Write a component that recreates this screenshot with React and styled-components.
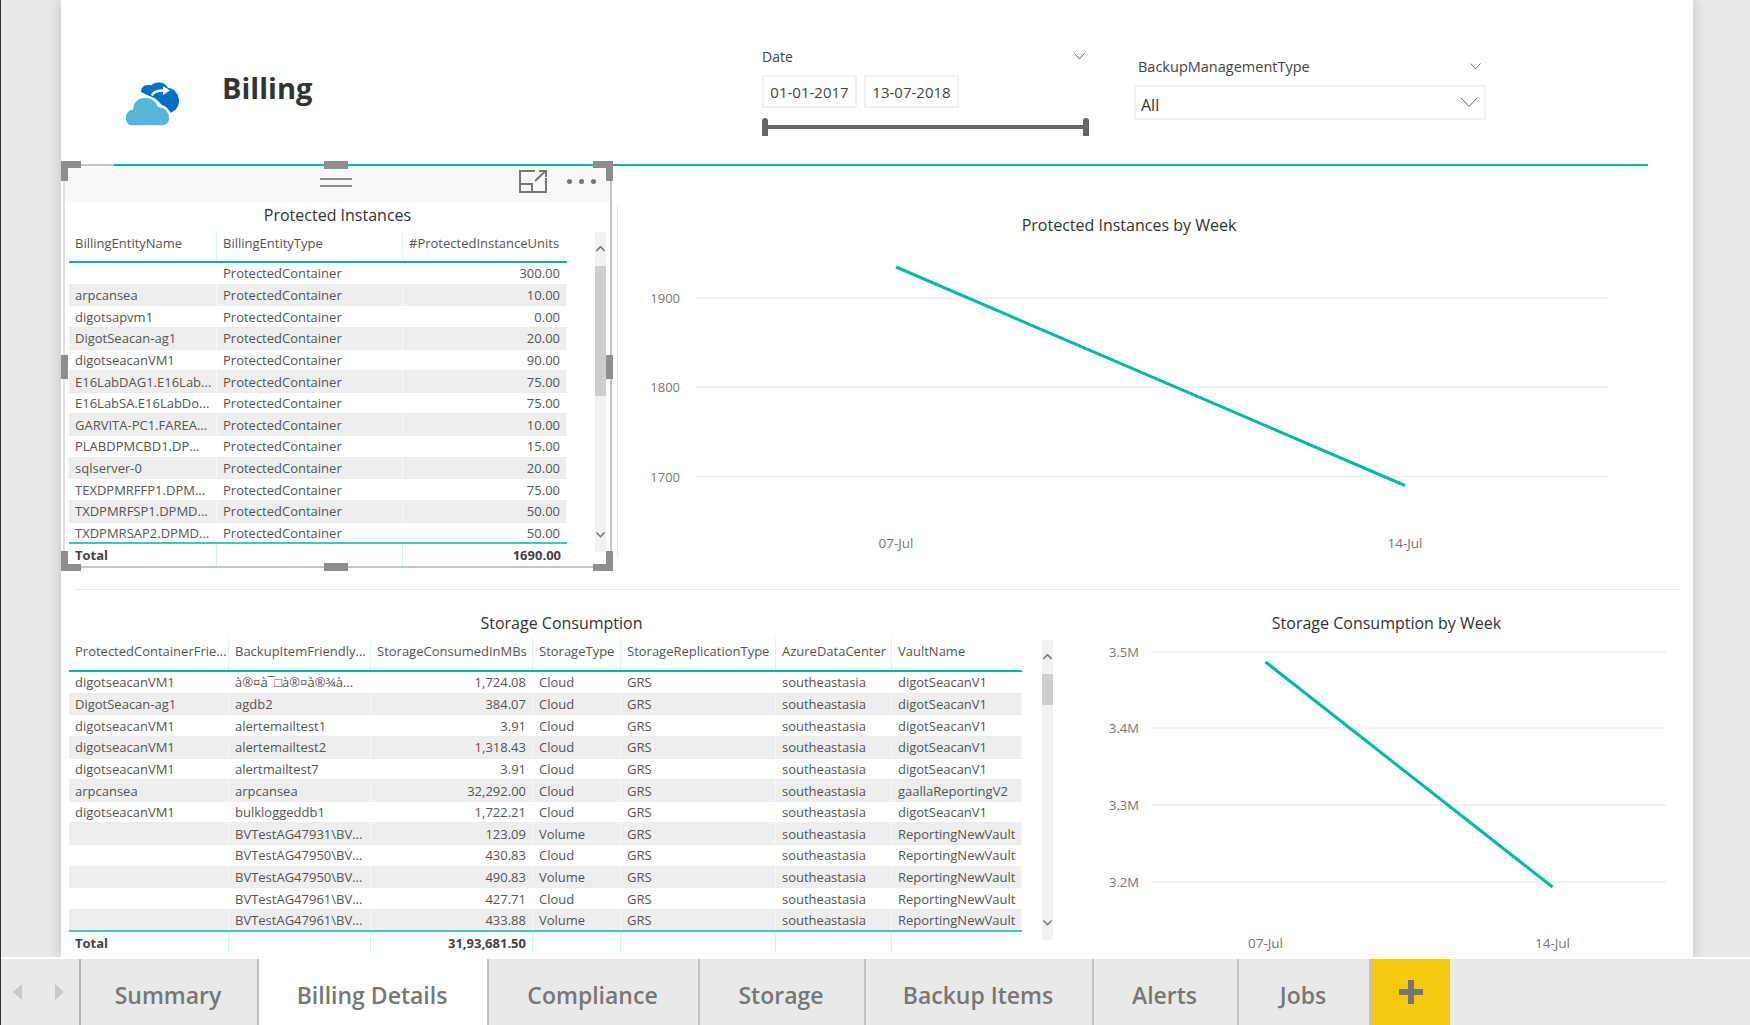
import React from 'react'
import styled, { createGlobalStyle } from 'styled-components'

const GlobalStyle = createGlobalStyle`
  html, body { margin: 0; padding: 0; }
  body { font-family: "Open Sans", "Noto Sans", sans-serif; background: #fff; overflow: hidden; }
  * { box-sizing: border-box; }
`

const protectedCols = '148px 186px 164px'
const protectedColumns = ['BillingEntityName', 'BillingEntityType', '#ProtectedInstanceUnits']
const protectedRows = [
  ['', 'ProtectedContainer', '300.00'],
  ['arpcansea', 'ProtectedContainer', '10.00'],
  ['digotsapvm1', 'ProtectedContainer', '0.00'],
  ['DigotSeacan-ag1', 'ProtectedContainer', '20.00'],
  ['digotseacanVM1', 'ProtectedContainer', '90.00'],
  ['E16LabDAG1.E16Lab...', 'ProtectedContainer', '75.00'],
  ['E16LabSA.E16LabDo...', 'ProtectedContainer', '75.00'],
  ['GARVITA-PC1.FAREA...', 'ProtectedContainer', '10.00'],
  ['PLABDPMCBD1.DP...', 'ProtectedContainer', '15.00'],
  ['sqlserver-0', 'ProtectedContainer', '20.00'],
  ['TEXDPMRFFP1.DPM...', 'ProtectedContainer', '75.00'],
  ['TXDPMRFSP1.DPMD...', 'ProtectedContainer', '50.00'],
  ['TXDPMRSAP2.DPMD...', 'ProtectedContainer', '50.00'],
]

const storageCols = '160px 142px 162px 88px 155px 116px 130px'
const storageColumns = [
  'ProtectedContainerFrie...', 'BackupItemFriendly...', 'StorageConsumedInMBs', 'StorageType',
  'StorageReplicationType', 'AzureDataCenter', 'VaultName',
]
const storageRow = (name, item, size, type, vault = 'digotSeacanV1') => [name, item, size, type, 'GRS', 'southeastasia', vault]
const storageRows = [
  storageRow('digotseacanVM1', 'à®¤à¯\u25a1à®¤à®¾à...', '1,724.08', 'Cloud'),
  storageRow('DigotSeacan-ag1', 'agdb2', '384.07', 'Cloud'),
  storageRow('digotseacanVM1', 'alertemailtest1', '3.91', 'Cloud'),
  storageRow('digotseacanVM1', 'alertemailtest2', '1,318.43', 'Cloud'),
  storageRow('digotseacanVM1', 'alertmailtest7', '3.91', 'Cloud'),
  storageRow('arpcansea', 'arpcansea', '32,292.00', 'Cloud', 'gaallaReportingV2'),
  storageRow('digotseacanVM1', 'bulkloggeddb1', '1,722.21', 'Cloud'),
  storageRow('', 'BVTestAG47931\\BV...', '123.09', 'Volume', 'ReportingNewVault'),
  storageRow('', 'BVTestAG47950\\BV...', '430.83', 'Cloud', 'ReportingNewVault'),
  storageRow('', 'BVTestAG47950\\BV...', '490.83', 'Volume', 'ReportingNewVault'),
  storageRow('', 'BVTestAG47961\\BV...', '427.71', 'Cloud', 'ReportingNewVault'),
  storageRow('', 'BVTestAG47961\\BV...', '433.88', 'Volume', 'ReportingNewVault'),
]

const tabs = [
  { name: 'Summary', width: 178 },
  { name: 'Billing Details', width: 230, active: true },
  { name: 'Compliance', width: 211 },
  { name: 'Storage', width: 166 },
  { name: 'Backup Items', width: 228 },
  { name: 'Alerts', width: 145 },
  { name: 'Jobs', width: 132 },
]

const Chevron = ({ size = 11, up = false, color = '#666', weight = 1 }) => (
  <svg width={size} height={size * 0.6} viewBox="0 0 10 6" style={{ display: 'block' }}>
    <polyline
      points={up ? '0.5,5.5 5,0.7 9.5,5.5' : '0.5,0.5 5,5.3 9.5,0.5'}
      fill="none"
      stroke={color}
      strokeWidth={weight}
      vectorEffect="non-scaling-stroke"
    />
  </svg>
)

const Logo = () => (
  <svg width="75" height="65" viewBox="0 0 75 65">
    <path
      d="M26 20C26 15 30 12 36 13.500C40 9 50 9.500 53 16C59 16 64 22 64 29C64 34 61 39 55 41L42 28Z"
      fill="#0072c6"
    />
    <path
      d="M17 54.500C12 54.500 9.500 50 9.500 46C9.500 41 13 37 17 36.500C17 30 23 24.500 30 24.500C36 24.500 42 28 44 34C50 34 55.500 40 55.500 46C55.500 51 51.500 54.500 47 54.500Z"
      fill="#59b4d9"
      stroke="#fff"
      strokeWidth="2.500"
    />
    <path d="M37 23.500C38 20.500 42 18.500 49 18.500" fill="none" stroke="#fff" strokeWidth="2.500" />
    <polygon points="48,14 55,18.500 48,23" fill="#fff" />
  </svg>
)

const FocusIcon = () => (
  <svg width="28" height="23" viewBox="0 0 28 23">
    <path
      d="M27 8V22H1V1H16M1 14H13V22M16 11L26 1.500M20 1H27V7"
      fill="none"
      stroke="#777"
      strokeWidth="2"
    />
  </svg>
)

const Chart = ({ width, height, grid, labelX, gridFrom, gridTo, xLabels, labelY, line, stroke }) => (
  <svg width={width} height={height} style={{ display: 'block' }}>
    {grid.map((g) => (
      <g key={g.label}>
        <line x1={gridFrom} x2={gridTo} y1={g.y} y2={g.y} stroke="#ececec" strokeWidth="1.500" />
        <text x={labelX} y={g.y + 5} textAnchor="end" fontSize="13" fill="#777">{g.label}</text>
      </g>
    ))}
    {xLabels.map((l) => (
      <text key={l.label} x={l.x} y={labelY} textAnchor="middle" fontSize="13.500" fill="#777">{l.label}</text>
    ))}
    <line x1={line[0]} y1={line[1]} x2={line[2]} y2={line[3]} stroke="#01b8aa" strokeWidth={stroke} />
  </svg>
)

const DataTable = ({ cols, columns, rows, total, totalColumn, width, headHeight, headPad, bodyHeight, totalHeight, numeric }) => (
  <TableWrap $width={width}>
    <HeadRow $cols={cols} $height={headHeight}>
      {columns.map((c, i) => (
        <HeadCell key={c} $last={i === columns.length - 1} $pad={headPad}>{c}</HeadCell>
      ))}
    </HeadRow>
    <Body $height={bodyHeight}>
      {rows.map((row, r) => (
        <Row key={r} $cols={cols} $odd={r % 2 === 1}>
          {row.map((cell, i) => (
            <Cell key={i} $right={i === numeric}>{cell}</Cell>
          ))}
        </Row>
      ))}
    </Body>
    <TotalRow $cols={cols} $height={totalHeight}>
      {columns.map((c, i) => (
        <TotalCell key={c} $right={i === numeric} $last={i === columns.length - 1}>
          {i === 0 ? 'Total' : i === totalColumn ? total : ''}
        </TotalCell>
      ))}
    </TotalRow>
  </TableWrap>
)

const Scrollbar = ({ height, thumb, marginTop = 0 }) => (
  <Track $height={height} $marginTop={marginTop}>
    <ArrowBox><Chevron size={9} up weight={1.5} color="#777" /></ArrowBox>
    <Thumb $height={thumb} />
    <TrackRest />
    <ArrowBox><Chevron size={9} weight={1.5} color="#777" /></ArrowBox>
  </Track>
)

export default function App() {
  return (
    <Page>
      <GlobalStyle />
      <Main>
        <Gutter $width={60} />
        <Canvas>
          <Header>
            <LogoBlock><Logo /></LogoBlock>
            <TitleBlock><PageTitle>Billing</PageTitle></TitleBlock>
            <DateSlicer>
              <SlicerLabel>
                <span>Date</span>
                <Chevron />
              </SlicerLabel>
              <DateInputs>
                <DateInput>01-01-2017</DateInput>
                <DateInput>13-07-2018</DateInput>
              </DateInputs>
              <Slider>
                <SliderHandle />
                <SliderTrack />
                <SliderHandle />
              </Slider>
            </DateSlicer>
            <TypeSlicer>
              <SlicerLabel>
                <span>BackupManagementType</span>
                <Chevron />
              </SlicerLabel>
              <Dropdown>
                <span>All</span>
                <Chevron size={18} />
              </Dropdown>
            </TypeSlicer>
          </Header>
          <TealRule />
          <TopRow>
            <FocusedVisual>
              <TopEdge />
              <Corner $v="top" $h="left" />
              <Corner $v="top" $h="right" />
              <Corner $v="bottom" $h="left" />
              <Corner $v="bottom" $h="right" />
              <MidHandle $v="top" />
              <MidHandle $v="bottom" />
              <SideHandle $h="left" />
              <SideHandle $h="right" />
              <VisualHeader>
                <Hamburger />
                <HeaderIcons>
                  <FocusIcon />
                  <Dots><i /><i /><i /></Dots>
                </HeaderIcons>
              </VisualHeader>
              <TableTitle $height={29}>Protected Instances</TableTitle>
              <TableArea $gap={28}>
                <DataTable
                  cols={protectedCols}
                  columns={protectedColumns}
                  rows={protectedRows}
                  total="1690.00"
                  totalColumn={2}
                  numeric={2}
                  width={498}
                  headHeight={31}
                  headPad={8}
                  bodyHeight={279}
                  totalHeight={24}
                />
                <Scrollbar height={320} thumb={130} />
              </TableArea>
            </FocusedVisual>
            <ChartPanel $width={1023} $border $marginLeft={5} $marginTop={39}>
              <ChartTitle $height={38} $pad={2}>Protected Instances by Week</ChartTitle>
              <Chart
                width={1023}
                height={314}
                grid={[{ label: '1900', y: 55 }, { label: '1800', y: 144 }, { label: '1700', y: 233.5 }]}
                labelX={62}
                gridFrom={77}
                gridTo={990}
                xLabels={[{ label: '07-Jul', x: 278 }, { label: '14-Jul', x: 787 }]}
                labelY={305}
                line={[278, 24, 787, 242.5]}
                stroke={3}
              />
            </ChartPanel>
          </TopRow>
          <Separator />
          <BottomRow>
            <StoragePanel>
              <TableTitle $height={30} $pad={3}>Storage Consumption</TableTitle>
              <TableArea $gap={20}>
                <DataTable
                  cols={storageCols}
                  columns={storageColumns}
                  rows={storageRows}
                  total="31,93,681.50"
                  totalColumn={2}
                  numeric={2}
                  width={953}
                  headHeight={34}
                  headPad={6}
                  bodyHeight={258}
                  totalHeight={23}
                />
                <Scrollbar height={300} thumb={31} marginTop={2} />
              </TableArea>
            </StoragePanel>
            <ChartPanel $width={613} $marginLeft={26}>
              <ChartTitle $height={30}>Storage Consumption by Week</ChartTitle>
              <Chart
                width={613}
                height={319}
                grid={[{ label: '3.5M', y: 14 }, { label: '3.4M', y: 90 }, { label: '3.3M', y: 167 }, { label: '3.2M', y: 244 }]}
                labelX={59}
                gridFrom={72}
                gridTo={586}
                xLabels={[{ label: '07-Jul', x: 185.5 }, { label: '14-Jul', x: 472.5 }]}
                labelY={310}
                line={[185.5, 24, 472.5, 249]}
                stroke={3}
              />
            </ChartPanel>
          </BottomRow>
        </Canvas>
        <Gutter $width={57} />
      </Main>
      <TabBar>
        <TabNav>
          <NavArrow $dir="left" />
          <NavArrow $dir="right" />
        </TabNav>
        {tabs.map((t) => (
          <Tab key={t.name} $width={t.width} $active={t.active}>{t.name}</Tab>
        ))}
        <AddTab>
          <svg width="24" height="24" viewBox="0 0 24 24">
            <path d="M9 0H15V9H24V15H15V24H9V15H0V9H9Z" fill="#757575" />
          </svg>
        </AddTab>
      </TabBar>
    </Page>
  )
}

const Page = styled.div`
  width: 1750px;
  height: 1025px;
  display: flex;
  flex-direction: column;
  border-left: 1px solid #333;
  overflow: hidden;
  background: #fff;
`

const Main = styled.div`
  display: flex;
  height: 957px;
  overflow: hidden;
`

const Gutter = styled.div`
  width: ${(props) => props.$width}px;
  flex: none;
  background: #e9e9e9;
`

const Canvas = styled.div`
  width: 1632px;
  flex: none;
  display: flex;
  flex-direction: column;
  background: #fff;
  box-shadow: 0 0 14px rgba(0, 0, 0, 0.18);
  position: relative;
`

const Header = styled.div`
  height: 164px;
  flex: none;
  display: flex;
  align-items: flex-start;
  padding-left: 54px;
`

const LogoBlock = styled.div`
  width: 75px;
  margin-top: 72px;
`

const TitleBlock = styled.div`
  width: 572px;
  padding-left: 32px;
  margin-top: 67px;
`

const PageTitle = styled.h1`
  margin: 0;
  font-size: 29px;
  line-height: 42px;
  font-weight: 700;
  color: #333;
`

const DateSlicer = styled.div`
  width: 372px;
  margin-top: 46px;
`

const TypeSlicer = styled.div`
  width: 352px;
  margin-top: 56px;
`

const SlicerLabel = styled.div`
  height: 20px;
  display: flex;
  align-items: center;
  justify-content: space-between;
  font-size: 14px;
  color: #444;
  width: 323px;
  ${TypeSlicer} & {
    width: 100%;
    padding: 0 5px 0 4px;
    font-size: 14.5px;
  }
`

const DateInputs = styled.div`
  display: flex;
  gap: 7px;
  margin-top: 9px;
`

const DateInput = styled.div`
  width: 95px;
  height: 33px;
  border: 2px solid #f1f1f1;
  display: flex;
  align-items: center;
  justify-content: center;
  font-size: 15px;
  color: #444;
`

const Slider = styled.div`
  width: 327px;
  height: 18px;
  margin-top: 10px;
  display: flex;
  align-items: center;
`

const SliderHandle = styled.div`
  width: 6px;
  height: 18px;
  background: #666;
  border-radius: 3px 3px 0 0;
`

const SliderTrack = styled.div`
  flex: 1;
  height: 4px;
  background: #666;
`

const Dropdown = styled.div`
  height: 35px;
  margin-top: 9px;
  border: 2px solid #f1f1f1;
  display: flex;
  align-items: center;
  justify-content: space-between;
  padding: 0 6px 0 5px;
  font-size: 16px;
  color: #333;
  span {
    padding-top: 5px;
  }
  svg {
    margin-top: 0;
  }
`

const TealRule = styled.div`
  height: 2px;
  flex: none;
  width: 1534px;
  margin-left: 53px;
  background: #01b8aa;
`

const TopRow = styled.div`
  height: 423px;
  flex: none;
  display: flex;
  align-items: flex-start;
`

const FocusedVisual = styled.div`
  position: relative;
  width: 549px;
  height: 402px;
  flex: none;
  margin-left: 2px;
  border: 2px solid #c4c4c4;
  border-left-color: #e0e0e0;
  border-top: none;
  background: #fff;
`

const TopEdge = styled.div`
  position: absolute;
  top: -2px;
  left: -2px;
  width: 51px;
  height: 2px;
  background: #c4c4c4;
`

const Corner = styled.div`
  position: absolute;
  z-index: 2;
  width: 20px;
  height: 20px;
  ${(props) => props.$v}: -5px;
  ${(props) => props.$h}: ${(props) => (props.$h === 'left' ? '-4px' : '-3px')};
  border-${(props) => props.$v}: 7px solid #8e8e8e;
  border-${(props) => props.$h}: 7px solid #8e8e8e;
`

const MidHandle = styled.div`
  position: absolute;
  z-index: 2;
  left: 259px;
  width: 24px;
  height: 8px;
  ${(props) => props.$v}: -5px;
  background: #8e8e8e;
`

const SideHandle = styled.div`
  position: absolute;
  z-index: 2;
  top: 189px;
  width: 7px;
  height: 24px;
  ${(props) => props.$h}: ${(props) => (props.$h === 'left' ? '-4px' : '-3px')};
  background: #8e8e8e;
`

const VisualHeader = styled.div`
  height: 37px;
  background: #f9f9f9;
  position: relative;
  display: flex;
  align-items: center;
  justify-content: center;
`

const Hamburger = styled.div`
  width: 32px;
  height: 9px;
  border-top: 2px solid #8c8c8c;
  border-bottom: 2px solid #8c8c8c;
  margin: -4px 3px 0 0;
`

const HeaderIcons = styled.div`
  position: absolute;
  top: 4px;
  left: 454px;
  display: flex;
  align-items: center;
  gap: 20px;
`

const Dots = styled.div`
  display: flex;
  gap: 7px;
  i {
    width: 5px;
    height: 5px;
    border-radius: 50%;
    background: #777;
  }
`

const TableTitle = styled.div`
  height: ${(props) => props.$height}px;
  padding-top: ${(props) => props.$pad || 0}px;
  text-align: center;
  font-size: 16px;
  line-height: 24px;
  color: #333;
`

const TableArea = styled.div`
  display: flex;
  align-items: flex-start;
  gap: ${(props) => props.$gap}px;
  ${FocusedVisual} & {
    padding-left: 4px;
  }
`

const TableWrap = styled.div`
  width: ${(props) => props.$width}px;
  flex: none;
  font-size: 13px;
  color: #555;
`

const HeadRow = styled.div`
  display: grid;
  grid-template-columns: ${(props) => props.$cols};
  height: ${(props) => props.$height}px;
  border-bottom: 2px solid #01b8aa;
`

const HeadCell = styled.div`
  display: flex;
  align-items: center;
  padding: 0 0 ${(props) => props.$pad}px 6px;
  white-space: nowrap;
  overflow: hidden;
  border-right: ${(props) => (props.$last ? 'none' : '1px solid #dff4f2')};
`

const Body = styled.div`
  height: ${(props) => props.$height}px;
  overflow: hidden;
`

const Row = styled.div`
  display: grid;
  grid-template-columns: ${(props) => props.$cols};
  height: 21.65px;
  background: ${(props) => (props.$odd ? '#eeeeee' : '#ffffff')};
  border-bottom: 1px solid #ececec;
`

const Cell = styled.div`
  display: flex;
  align-items: center;
  justify-content: ${(props) => (props.$right ? 'flex-end' : 'flex-start')};
  padding: 0 6px;
  white-space: nowrap;
  overflow: hidden;
  border-right: 1px solid rgba(255, 255, 255, 0.7);
`

const TotalRow = styled.div`
  display: grid;
  grid-template-columns: ${(props) => props.$cols};
  height: ${(props) => props.$height}px;
  border-top: 2px solid #3cc8bc;
  font-weight: 700;
  color: #444;
`

const TotalCell = styled.div`
  display: flex;
  align-items: center;
  justify-content: ${(props) => (props.$right ? 'flex-end' : 'flex-start')};
  padding: 0 6px;
  border-right: ${(props) => (props.$last ? 'none' : '1px solid #d5f2ef')};
`

const Track = styled.div`
  width: 11px;
  flex: none;
  height: ${(props) => props.$height}px;
  margin-top: ${(props) => props.$marginTop}px;
  background: #f1f1f1;
  display: flex;
  flex-direction: column;
`

const ArrowBox = styled.div`
  height: 34px;
  display: flex;
  align-items: center;
  justify-content: center;
`

const Thumb = styled.div`
  height: ${(props) => props.$height}px;
  background: #cdcdcd;
`

const TrackRest = styled.div`
  flex: 1;
`

const ChartPanel = styled.div`
  width: ${(props) => props.$width}px;
  flex: none;
  margin-left: ${(props) => props.$marginLeft}px;
  margin-top: ${(props) => props.$marginTop || 0}px;
  border-left: ${(props) => (props.$border ? '1px solid #e6e6e6' : 'none')};
`

const ChartTitle = styled.div`
  height: ${(props) => props.$height}px;
  padding-top: ${(props) => props.$pad || 0}px;
  display: flex;
  align-items: center;
  justify-content: center;
  font-size: 16px;
  color: #333;
`

const Separator = styled.div`
  height: 1px;
  flex: none;
  width: 1606px;
  margin-left: 13px;
  background: #e6e6e6;
`

const BottomRow = styled.div`
  flex: 1;
  display: flex;
  padding-top: 18px;
`

const StoragePanel = styled.div`
  width: 985px;
  flex: none;
  margin-left: 8px;
`

const TabBar = styled.div`
  height: 66px;
  margin-top: 2px;
  flex: none;
  display: flex;
  background: #e9e9e9;
`

const TabNav = styled.div`
  width: 80px;
  flex: none;
  display: flex;
  align-items: center;
  justify-content: space-between;
  padding: 0 15px 0 12px;
  border-right: 2px solid #b4b4b4;
`

const NavArrow = styled.div`
  width: 0;
  height: 0;
  border-top: 8px solid transparent;
  border-bottom: 8px solid transparent;
  border-${(props) => (props.$dir === 'left' ? 'right' : 'left')}: 9px solid #c8c8c8;
`

const Tab = styled.div`
  width: ${(props) => props.$width}px;
  flex: none;
  display: flex;
  align-items: center;
  justify-content: center;
  padding: 5px 2px 0 0;
  font-size: 23px;
  font-weight: 600;
  color: #777;
  background: ${(props) => (props.$active ? '#fff' : 'transparent')};
  border-right: 2px solid #c2c2c2;
`

const AddTab = styled.div`
  width: 79px;
  flex: none;
  display: flex;
  align-items: center;
  justify-content: center;
  background: #f2c811;
`
